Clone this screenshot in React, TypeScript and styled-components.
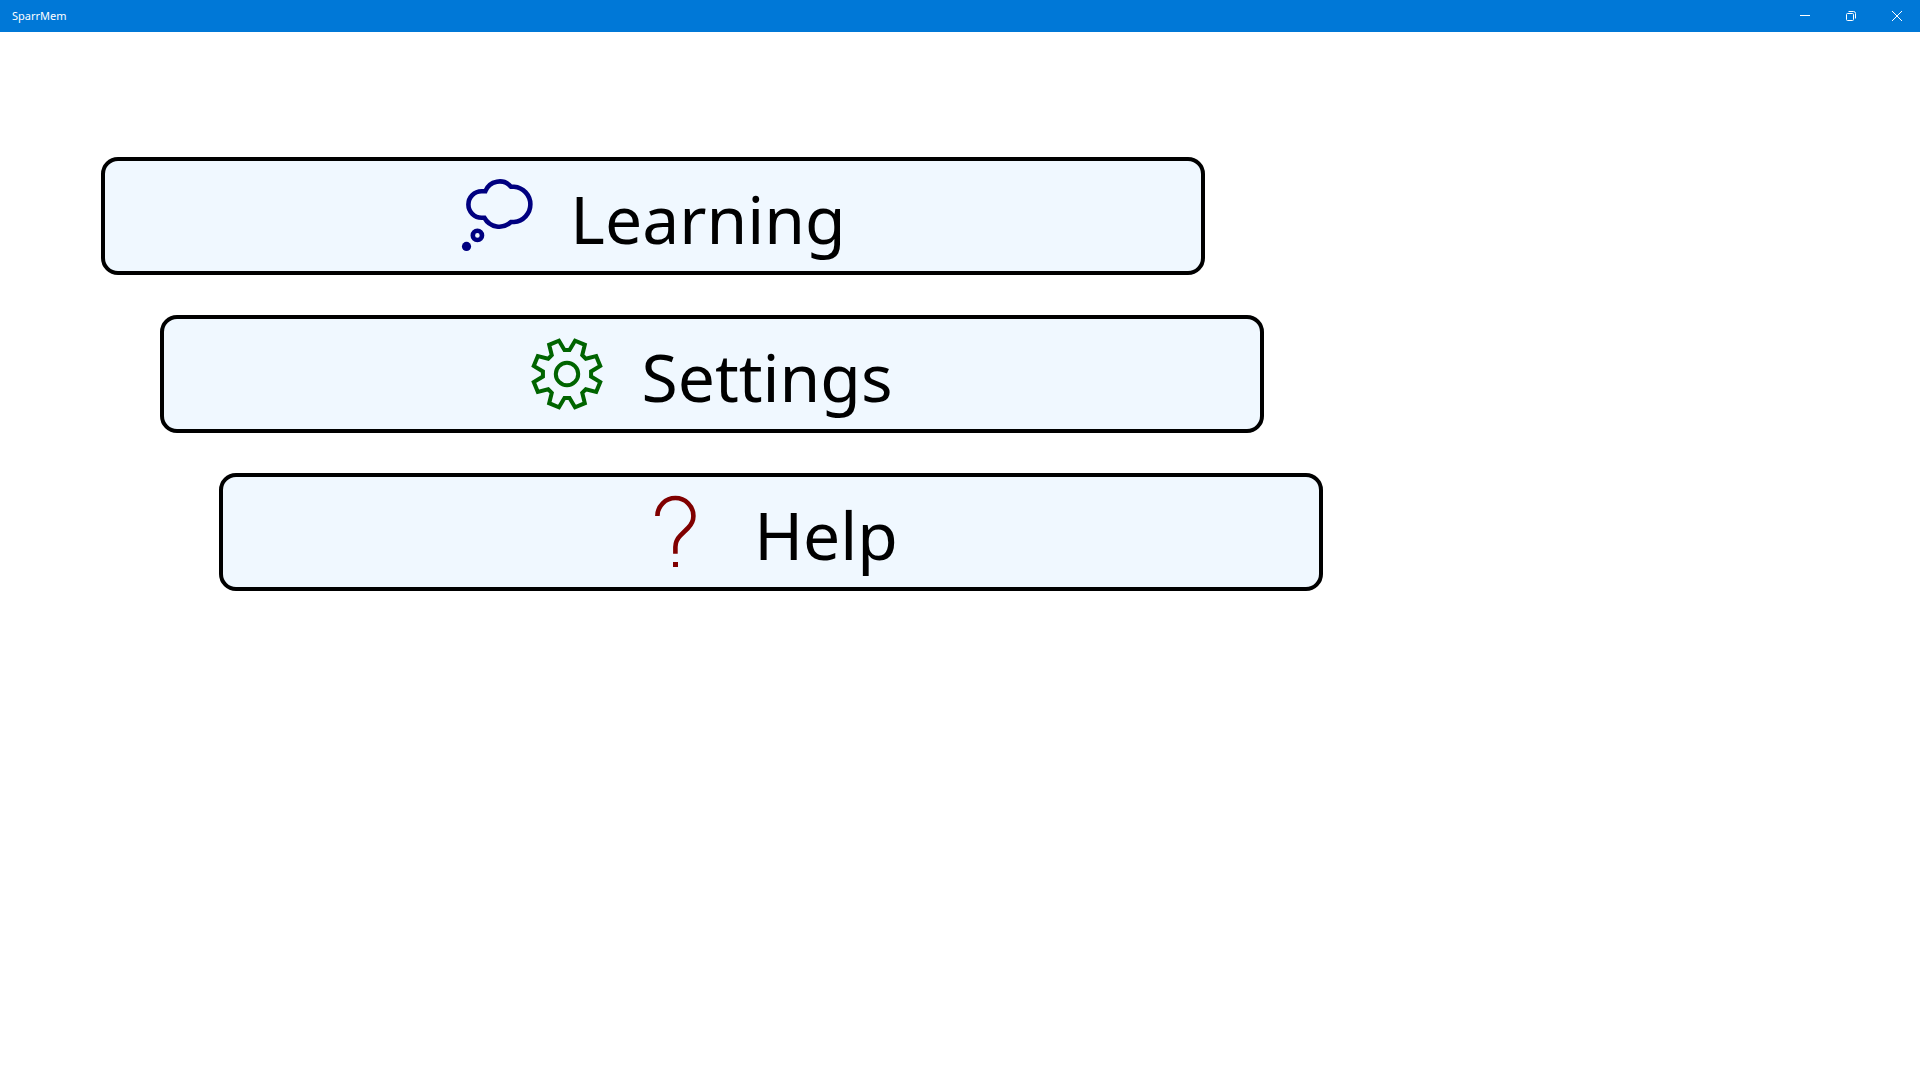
import React from "react";
import styled, { createGlobalStyle } from "styled-components";

const GlobalStyle = createGlobalStyle`
  * { box-sizing: border-box; }
  body {
    margin: 0;
    background: #ffffff;
    color: #000000;
    font-family: "Segoe UI", "Noto Sans", "Open Sans", sans-serif;
  }
`;

const TitleBar = styled.header`
  display: flex;
  align-items: center;
  justify-content: space-between;
  height: 32px;
  padding-left: 12px;
  background: #0078d7;
  color: #ffffff;
`;

const AppTitle = styled.h1`
  margin: 0;
  font-size: 11px;
  font-weight: 400;
  line-height: 16px;
`;

const WindowControls = styled.div`
  display: flex;
  align-self: stretch;
`;

const WindowButton = styled.button`
  display: flex;
  align-items: center;
  justify-content: center;
  width: 46px;
  padding: 0;
  border: 0;
  background: transparent;
  color: inherit;
`;

const Menu = styled.nav`
  display: flex;
  flex-direction: column;
  gap: 40px;
  padding: 125px 0 40px 101px;
`;

const MenuButton = styled.button<{ $step: number }>`
  display: flex;
  align-items: center;
  justify-content: center;
  gap: 38px;
  width: 57.5vw;
  min-height: 118px;
  margin-left: ${({ $step }) => $step * 59}px;
  padding: 0;
  border: 4px solid #000000;
  border-radius: 17px;
  background: #f0f8ff;
  color: inherit;
  font-family: inherit;
  font-size: 66px;
  line-height: 90px;
`;

const MenuLabel = styled.span`
  padding-top: 4px;
`;

const MenuIcon = styled.svg<{ $color: string }>`
  flex: none;
  width: 72px;
  height: 72px;
  overflow: visible;
  fill: none;
  stroke: ${({ $color }) => $color};
  color: ${({ $color }) => $color};
`;

const ThoughtIcon = () => (
  <MenuIcon $color="#000080" viewBox="0 0 72 72" strokeWidth="4.6" aria-hidden="true">
    <path d="M25.3 11.3A15.2 15.2 0 0 1 51 6.7H54A17.7 17.7 0 0 1 54 42H51A17 17 0 0 1 24.3 37.7H21.6A13.2 13.2 0 0 1 21.6 11.3Z" />
    <circle cx="17.4" cy="55.4" r="4.6" />
    <circle cx="6.5" cy="66.4" r="4.6" fill="currentColor" stroke="none" />
  </MenuIcon>
);

const gearOutline = Array.from({ length: 8 }, (_, i) =>
  [
    [-6, 24.2],
    [6, 24.2],
    [13.6, 34.2],
    [31.4, 34.2],
  ]
    .map(([offset, radius]) => {
      const angle = ((i * 45 + offset) * Math.PI) / 180;
      return `${(36 + radius * Math.sin(angle)).toFixed(2)},${(36 - radius * Math.cos(angle)).toFixed(2)}`;
    })
    .join(" ")
).join(" ");

const GearIcon = () => (
  <MenuIcon $color="#006400" viewBox="0 0 72 72" strokeWidth="4" aria-hidden="true">
    <polygon points={gearOutline} />
    <circle cx="36" cy="36" r="11.2" />
  </MenuIcon>
);

const QuestionIcon = () => (
  <MenuIcon $color="#800000" viewBox="0 0 72 72" strokeWidth="4.6" aria-hidden="true">
    <path d="M13.4 20A18 18 0 0 1 49.4 20C49.4 25 47.5 28.5 44 32L36.5 39.3C33 42.8 31.4 46.5 31.4 51V57.7" />
    <rect x="29" y="66" width="5" height="5" fill="currentColor" stroke="none" />
  </MenuIcon>
);

const items = [
  { label: "Learning", Icon: ThoughtIcon },
  { label: "Settings", Icon: GearIcon },
  { label: "Help", Icon: QuestionIcon },
];

export default function App() {
  return (
    <>
      <GlobalStyle />
      <TitleBar>
        <AppTitle>SparrMem</AppTitle>
        <WindowControls>
          <WindowButton type="button" aria-label="Minimize">
            <svg width="10" height="10" viewBox="0 0 10 10" stroke="currentColor" fill="none">
              <path d="M0 4.5H10" />
            </svg>
          </WindowButton>
          <WindowButton type="button" aria-label="Restore">
            <svg width="10" height="10" viewBox="0 0 10 10" stroke="currentColor" fill="none">
              <rect x="0.5" y="2.5" width="7" height="7" rx="1" />
              <path d="M2.5 0.5H7.5Q9.5 0.5 9.5 2.5V7.5" />
            </svg>
          </WindowButton>
          <WindowButton type="button" aria-label="Close">
            <svg width="10" height="10" viewBox="0 0 10 10" stroke="currentColor" fill="none">
              <path d="M0 0L10 10M10 0L0 10" />
            </svg>
          </WindowButton>
        </WindowControls>
      </TitleBar>
      <main>
        <Menu aria-label="Main menu">
          {items.map(({ label, Icon }, step) => (
            <MenuButton type="button" key={label} $step={step}>
              <Icon />
              <MenuLabel>{label}</MenuLabel>
            </MenuButton>
          ))}
        </Menu>
      </main>
    </>
  );
}
